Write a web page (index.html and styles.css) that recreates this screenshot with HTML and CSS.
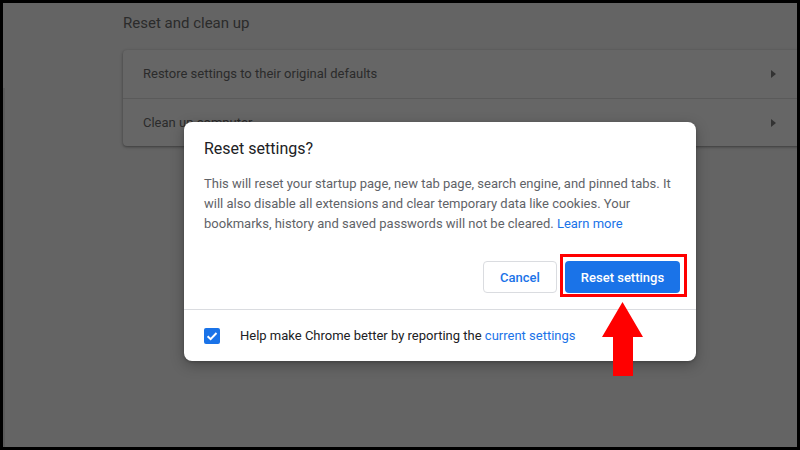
FILE: index.html
```html
<!DOCTYPE html>
<html>
<head>
<meta charset="utf-8">
<link rel="stylesheet" href="styles.css">
</head>
<body>
<div class="screen">
  <div class="layout">
    <div class="side"></div>
    <div class="main">
      <h2 class="section-title">Reset and clean up</h2>
      <div class="card">
        <div class="row"><span>Restore settings to their original defaults</span><span class="tri"></span></div>
        <div class="row"><span>Clean up computer</span><span class="tri"></span></div>
      </div>
    </div>
  </div>

  <div class="dialog">
    <div class="dlg-body">
      <div class="dlg-title">Reset settings?</div>
      <p class="dlg-text">This will reset your startup page, new tab page, search engine, and pinned tabs. It will also disable all extensions and clear temporary data like cookies. Your bookmarks, history and saved passwords will not be cleared. <a class="link">Learn more</a></p>
      <div class="buttons">
        <button class="btn cancel">Cancel</button>
        <button class="btn primary">Reset settings</button>
      </div>
    </div>
    <div class="dlg-footer">
      <span class="checkbox"><svg viewBox="0 0 16 16" width="16" height="16"><path d="M3.6 8.2 L6.6 11.1 L12.5 5" fill="none" stroke="#fff" stroke-width="2"/></svg></span>
      <span class="footer-text">Help make Chrome better by reporting the <a class="link">current settings</a></span>
    </div>
  </div>

  <div class="highlight"></div>
  <svg class="arrow" viewBox="0 0 41 74" width="41" height="74"><path d="M20.5 0 L41 35 L31 35 L31 74 L11 74 L11 35 L0 35 Z" fill="#ff0000"/></svg>
</div>
</body>
</html>
```
FILE: styles.css
```css
html, body {
  margin: 0;
  padding: 0;
}
body {
  width: 800px;
  height: 450px;
  background: #000;
  padding: 3px;
  box-sizing: border-box;
  font-family: Roboto, "Liberation Sans", Arial, sans-serif;
  overflow: hidden;
}
.screen {
  position: relative;
  width: 794px;
  height: 444px;
  background: #646464;
  overflow: hidden;
}
.layout {
  display: flex;
  height: 100%;
}
.side {
  width: 2px;
  margin-top: 85px;
  background: #5b5b5b;
  flex: none;
}
.main {
  flex: 1;
  padding-left: 118px;
  padding-top: 10px;
}
.section-title {
  margin: 0 0 17px 0;
  font-size: 15px;
  line-height: 20px;
  font-weight: 400;
  color: #2b2b2b;
}
.card {
  background: #666;
  border-radius: 4px 0 0 4px;
  box-shadow: 0 1px 2px rgba(0,0,0,0.25), 0 1px 3px 1px rgba(0,0,0,0.12);
  margin-right: -10px;
}
.row {
  height: 48px;
  display: flex;
  align-items: center;
  justify-content: space-between;
  padding: 0 31px 0 20px;
  font-size: 13px;
  color: #2b2b2b;
}
.row:first-child {
  padding-bottom: 1px;
  box-sizing: border-box;
}
.row + .row {
  border-top: 1px solid #5a5a5a;
  height: 47px;
}
.tri {
  width: 0;
  height: 0;
  border-top: 4.5px solid transparent;
  border-bottom: 4.5px solid transparent;
  border-left: 5px solid #333;
}

.dialog {
  position: absolute;
  left: 181px;
  top: 119px;
  width: 512px;
  height: 239px;
  background: #fff;
  border-radius: 8px;
  box-shadow: 0 4px 14px rgba(0,0,0,0.28), 0 1px 3px rgba(0,0,0,0.2);
  display: flex;
  flex-direction: column;
}
.dlg-body {
  padding: 17px 16px 16px 20px;
  border-bottom: 1px solid #dadce0;
}
.dlg-title {
  font-size: 16px;
  line-height: 20px;
  color: #202124;
}
.dlg-text {
  margin: 15px 0 0 0;
  font-size: 13px;
  line-height: 20px;
  color: #5f6368;
  padding-right: 4px;
}
.link {
  color: #1a73e8;
}
.buttons {
  display: flex;
  justify-content: flex-end;
  gap: 8px;
  margin-top: 27px;
}
.btn {
  font-family: inherit;
  font-size: 13px;
  font-weight: 500;
  height: 32px;
  border-radius: 4px;
  box-sizing: border-box;
  cursor: pointer;
}
.cancel {
  width: 74px;
  background: #fff;
  color: #1a73e8;
  border: 1px solid #dadce0;
}
.primary {
  width: 115px;
  background: #1a73e8;
  color: #fff;
  border: none;
}
.dlg-footer {
  flex: 1;
  display: flex;
  align-items: center;
  padding-left: 20px;
  gap: 20px;
}
.checkbox {
  width: 16px;
  height: 16px;
  border-radius: 2px;
  background: #1a73e8;
  display: block;
}
.checkbox svg {
  display: block;
}
.footer-text {
  font-size: 13px;
  color: #202124;
}
.highlight {
  position: absolute;
  left: 557px;
  top: 251px;
  width: 127px;
  height: 43px;
  border: 3px solid #ff0000;
  box-sizing: border-box;
}
.arrow {
  position: absolute;
  left: 599px;
  top: 299px;
}
```
